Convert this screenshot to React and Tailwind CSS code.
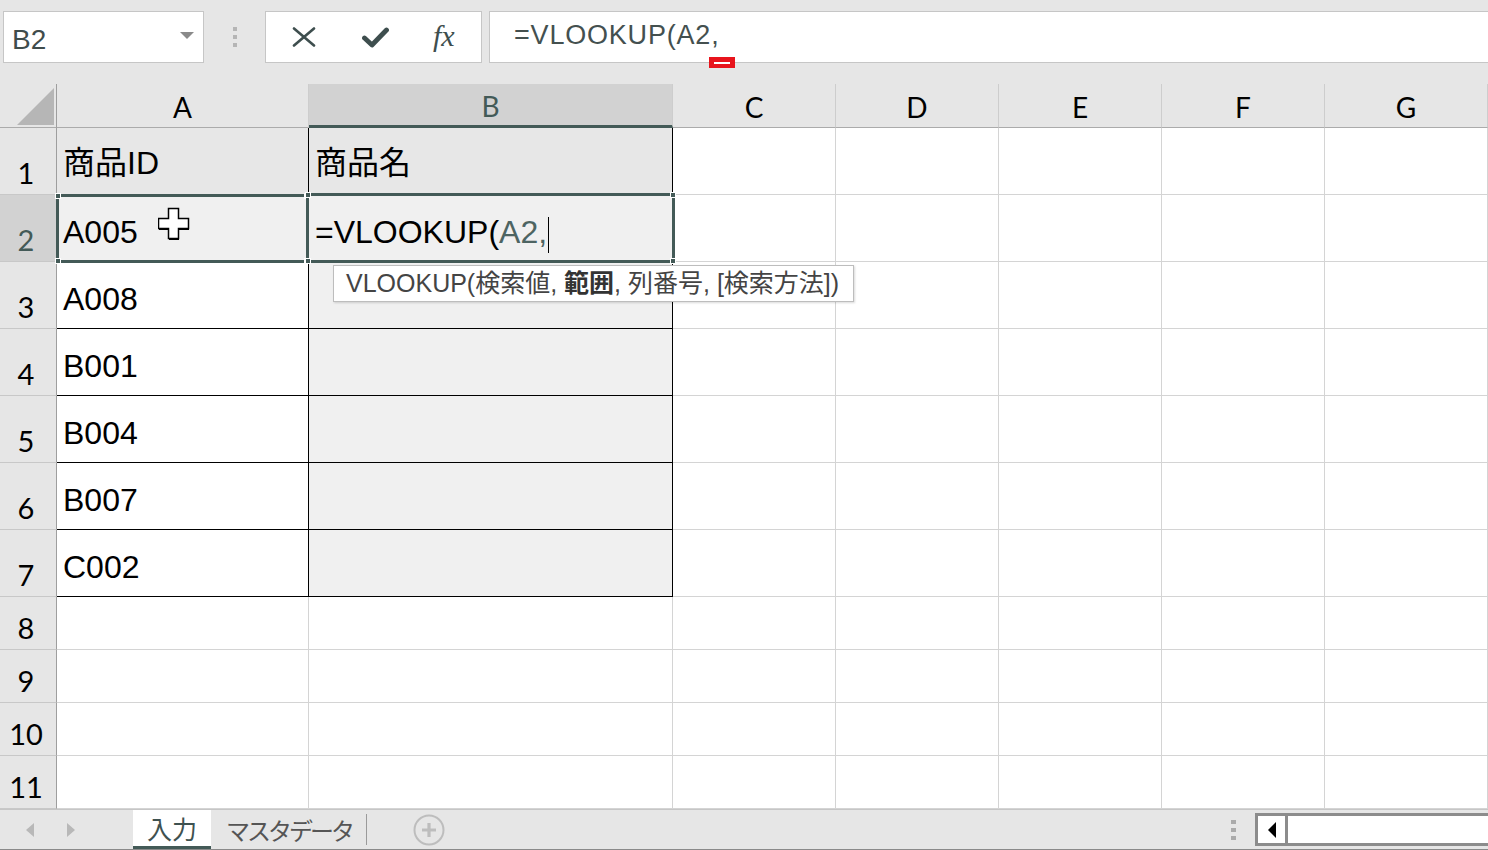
import React from 'react';

const COLS = ['A', 'B', 'C', 'D', 'E', 'F', 'G'];

const ROWS = [
  { n: 1, a: '商品ID', b: '商品名' },
  { n: 2, a: 'A005', formula: true },
  { n: 3, a: 'A008' },
  { n: 4, a: 'B001' },
  { n: 5, a: 'B004' },
  { n: 6, a: 'B007' },
  { n: 7, a: 'C002' },
  { n: 8 },
  { n: 9 },
  { n: 10 },
  { n: 11 },
];

const SLATE = 'text-[#435a57]';
const headFont = "font-['Lato','Liberation_Sans',sans-serif]";
const cellFont = "font-['Liberation_Sans','Noto_Sans_CJK_JP',sans-serif]";

const Handle = ({ className }) => (
  <div className={`absolute w-[6px] h-[6px] bg-[#435a57] border border-white ${className}`} />
);

const FormulaBar = () => (
  <div className="relative h-[84px] flex items-start pt-[11px]">
    {/* name box */}
    <div className="ml-[3px] w-[201px] h-[52px] bg-white border border-[#c6c6c6] flex items-start justify-between pl-[8px] pr-[9px]">
      <span className={`${cellFont} text-[28px] leading-none pt-[14px] text-[#3f4c4c]`}>B2</span>
      <svg width="14" height="7" viewBox="0 0 14 7" className="mt-[20px]">
        <path d="M0 0 H14 L7 7 Z" fill="#8a8a8a" />
      </svg>
    </div>

    <div className="ml-[29px] mt-[16px] flex flex-col gap-[4px]">
      <div className="w-[4px] h-[4px] bg-[#b5b5b5]" />
      <div className="w-[4px] h-[4px] bg-[#b5b5b5]" />
      <div className="w-[4px] h-[4px] bg-[#b5b5b5]" />
    </div>

    {/* cancel / enter / insert function */}
    <div className="ml-[28px] w-[217px] h-[52px] bg-white border border-[#c6c6c6] flex items-center pl-[26px]">
      <svg width="24" height="20" viewBox="0 0 24 20">
        <path d="M2 1.5 L22 18.5 M22 1.5 L2 18.5" stroke="#3e4e4e" strokeWidth="2.6" strokeLinecap="round" />
      </svg>
      <svg width="27" height="21" viewBox="0 0 27 21" className="ml-[46px]">
        <path d="M2.5 11 L10 18 L24.5 3" stroke="#3e4e4e" strokeWidth="4.8" fill="none" strokeLinejoin="round" strokeLinecap="round" />
      </svg>
      <span className="ml-[44px] font-['Liberation_Serif',serif] italic text-[30px] leading-none text-[#3e4e4e] -mt-[2px]">fx</span>
    </div>

    {/* formula input */}
    <div className="ml-[7px] flex-1 h-[52px] bg-white border border-r-0 border-[#c6c6c6] pl-[24px] pt-[10px]">
      <span className={`${cellFont} text-[27px] leading-none tracking-[0.8px] text-[#44504f]`}>=VLOOKUP(A2,</span>
    </div>

    {/* argument marker */}
    <div className="absolute left-[709px] top-[57px] w-[26px] h-[11px] bg-[#e8141c] flex items-center justify-center">
      <div className="w-[16px] h-[2px] bg-white" />
    </div>
  </div>
);

const ColumnHeader = ({ col }) => {
  const sel = col === 'B';
  return (
    <div
      className={`flex items-center justify-center pt-[2px] border-r border-r-[#cdcdcd] ${headFont} text-[28px] leading-none ${
        sel ? `bg-[#d2d2d2] border-b-[3px] border-b-[#435a57] ${SLATE}` : 'bg-[#e6e6e6] border-b border-b-[#ababab] text-black'
      }`}
    >
      {col}
    </div>
  );
};

const RowHeader = ({ n }) => {
  const sel = n === 2;
  return (
    <div
      className={`flex items-end justify-center pb-[7px] pr-[4px] border-r border-b border-r-[#9e9e9e] border-b-[#c8c8c8] ${headFont} text-[29px] leading-none ${
        sel ? `bg-[#d2d2d2] ${SLATE}` : 'bg-[#e6e6e6] text-black'
      }`}
    >
      {n}
    </div>
  );
};

const Cell = ({ row, ci }) => {
  const inTable = ci < 2 && row.n <= 7;
  let bg = 'bg-white';
  if (inTable && row.n === 1) bg = 'bg-[#e7e7e7]';
  else if (inTable && (ci === 1 || row.n === 2)) bg = 'bg-[#f0f0f0]';
  const border = inTable ? 'border-black' : 'border-[#d4d4d4]';

  let content = null;
  if (ci === 0 && row.a) content = row.a;
  if (ci === 1 && row.b) content = row.b;
  if (ci === 1 && row.formula) {
    content = (
      <>
        <span className="text-black">=VLOOKUP(</span>
        <span className="text-[#4d6462]">A2,</span>
        <span className="inline-block w-[1px] h-[36px] bg-black ml-[1px] -mb-[6px]" />
      </>
    );
  }

  return (
    <div
      className={`flex items-center whitespace-nowrap border-r border-b ${border} ${bg} pl-[6px] ${
        row.n === 1 ? 'pt-[4px]' : 'pt-[8px]'
      } ${cellFont} text-[32px] leading-none text-black`}
    >
      {content}
    </div>
  );
};

const Sheet = () => (
  <div className="relative h-[725px] overflow-hidden">
    <div className="grid grid-cols-[57px_252px_364px_163px_163px_163px_163px_163px] grid-rows-[44px_repeat(7,67px)_repeat(4,53px)]">
      <div className="relative bg-[#e6e6e6] border-r border-b border-r-[#9e9e9e] border-b-[#ababab]">
        <svg width="38" height="38" viewBox="0 0 38 38" className="absolute left-[17px] top-[4px]">
          <path d="M37 0 V37 H0 Z" fill="#b6b6b6" />
        </svg>
      </div>
      {COLS.map((c) => (
        <ColumnHeader key={c} col={c} />
      ))}
      {ROWS.map((row) => (
        <React.Fragment key={row.n}>
          <RowHeader n={row.n} />
          {COLS.map((c, ci) => (
            <Cell key={c} row={row} ci={ci} />
          ))}
        </React.Fragment>
      ))}
    </div>

    {/* reference border around A2 */}
    <div className="absolute left-[56px] top-[110px] w-[253px] h-[69px] border-[3px] border-[#435a57]">
      <Handle className="-left-[4px] -top-[4px]" />
      <Handle className="-right-[4px] -top-[4px]" />
      <Handle className="-left-[4px] -bottom-[4px]" />
      <Handle className="-right-[4px] -bottom-[4px]" />
    </div>

    {/* active cell B2 */}
    <div className="absolute left-[306px] top-[109px] w-[369px] h-[70px] border-[3px] border-[#435a57]">
      <Handle className="-left-[4px] -top-[4px]" />
      <Handle className="-right-[4px] -top-[4px]" />
      <Handle className="-left-[4px] -bottom-[4px]" />
      <Handle className="-right-[4px] -bottom-[4px]" />
    </div>

    {/* mouse pointer */}
    <svg width="34" height="34" viewBox="0 0 34 34" className="absolute left-[158px] top-[123px]">
      <path d="M11 3 H21 V13 H31 V23 H21 V33 H11 V23 H1 V13 H11 Z" fill="#000" />
      <path d="M9.5 1.5 H19.5 V11.5 H29.5 V21.5 H19.5 V31.5 H9.5 V21.5 H-0.5 V11.5 H9.5 Z" fill="#fff" stroke="#000" strokeWidth="1.5" transform="translate(1 0)" />
    </svg>

    {/* function argument tip */}
    <div className="absolute left-[333px] top-[181px] w-[521px] h-[37px] bg-white border border-[#bdbdbd] shadow-[1px_1px_2px_rgba(0,0,0,0.15)] flex items-center pl-[12px]">
      <span className={`${cellFont} text-[25px] leading-none text-[#444] whitespace-nowrap`}>
        VLOOKUP(検索値, <span className="font-bold text-[#333]">範囲</span>, 列番号, [検索方法])
      </span>
    </div>
  </div>
);

const TabBar = () => (
  <div className="h-[41px] flex items-stretch bg-[#e6e6e6] border-t border-t-[#c6c6c6] border-b border-b-[#8a8a8a]">
    <div className="w-[133px] flex items-center pl-[26px]">
      <svg width="8" height="14" viewBox="0 0 8 14">
        <path d="M8 0 V14 L0 7 Z" fill="#b8b8b8" />
      </svg>
      <svg width="8" height="14" viewBox="0 0 8 14" className="ml-[33px]">
        <path d="M0 0 V14 L8 7 Z" fill="#b8b8b8" />
      </svg>
    </div>
    <div className="w-[78px] bg-white border-b-[3px] border-b-[#435a57] flex items-center justify-center">
      <span className="font-['Noto_Sans_CJK_JP',sans-serif] text-[25px] leading-none text-[#3e5150]">入力</span>
    </div>
    <div className="w-[156px] flex items-center pl-[15px] border-r border-r-[#9a9a9a] my-[4px]">
      <span className="font-['Noto_Sans_CJK_JP',sans-serif] text-[24px] leading-none tracking-[-3px] text-[#555]">マスタデータ</span>
    </div>
    <div className="flex items-center ml-[46px]">
      <svg width="32" height="32" viewBox="0 0 32 32">
        <circle cx="16" cy="16" r="14.5" fill="none" stroke="#bdbdbd" strokeWidth="2" />
        <path d="M16 9 V23 M9 16 H23" stroke="#bdbdbd" strokeWidth="3.2" />
      </svg>
    </div>

    <div className="ml-auto flex items-center">
      <div className="flex flex-col gap-[4px] mr-[19px]">
        <div className="w-[5px] h-[4px] bg-[#aaaaaa]" />
        <div className="w-[5px] h-[4px] bg-[#aaaaaa]" />
        <div className="w-[5px] h-[4px] bg-[#aaaaaa]" />
      </div>
      <div className="w-[33px] h-[33px] bg-white border-[3px] border-[#8c8c8c] flex items-center justify-center">
        <svg width="8" height="16" viewBox="0 0 8 16">
          <path d="M8 0 V16 L0 8 Z" fill="#000" />
        </svg>
      </div>
      <div className="w-[200px] h-[33px] bg-white border-[3px] border-l-0 border-r-0 border-[#8c8c8c]" />
    </div>
  </div>
);

export default function App() {
  return (
    <div className="w-[1488px] h-[850px] overflow-hidden bg-[#e6e6e6] flex flex-col">
      <FormulaBar />
      <Sheet />
      <TabBar />
    </div>
  );
}
